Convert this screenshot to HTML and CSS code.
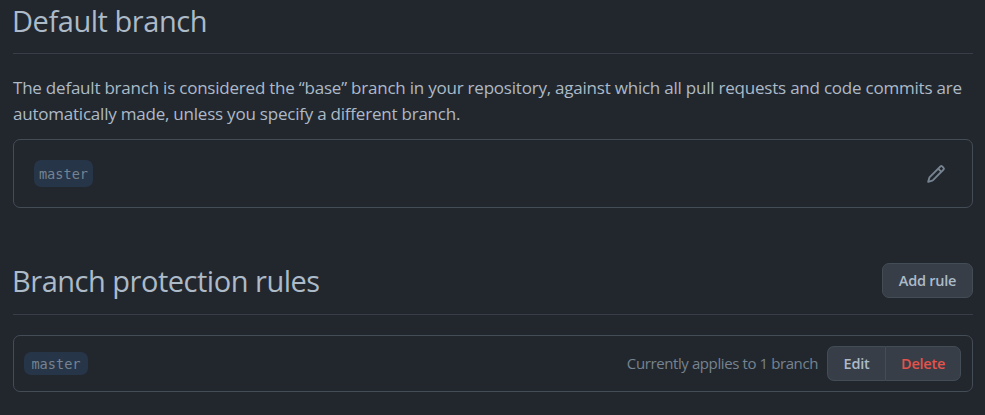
FILE: index.html
```html
<!DOCTYPE html>
<html lang="en">
<head>
<meta charset="utf-8">
<title>Branches</title>
<link rel="stylesheet" href="styles.css">
</head>
<body>
<main class="settings">
  <section class="default-branch">
    <header class="subhead"><h2 class="heading heading-default">Default branch</h2></header>
    <p class="description">The default branch is considered the “base” branch in your repository, against which all pull requests and code commits are<br>automatically made, unless you specify a different branch.</p>
    <div class="box branch-box">
      <code class="branch-name">master</code>
      <button class="icon-button" aria-label="Rename branch">
        <svg class="pencil" viewBox="0 0 16 16" width="20" height="20" fill="currentColor"><path fill-rule="evenodd" d="M11.013 1.427a1.75 1.75 0 012.474 0l1.086 1.086a1.75 1.75 0 010 2.474l-8.61 8.61c-.21.21-.47.364-.756.445l-3.251.93a.75.75 0 01-.927-.928l.929-3.25a1.75 1.75 0 01.445-.758l8.61-8.61zm1.414 1.06a.25.25 0 00-.354 0L10.811 3.75l1.439 1.44 1.263-1.263a.25.25 0 000-.354l-1.086-1.086zM11.189 6.25L9.75 4.81l-6.286 6.287a.25.25 0 00-.064.108l-.558 1.953 1.953-.558a.249.249 0 00.108-.064l6.286-6.286z"/></svg>
      </button>
    </div>
  </section>
  <section class="rules">
    <header class="subhead rules-head">
      <h2 class="heading heading-rules">Branch protection rules</h2>
      <button class="btn add-rule"><span>Add rule</span></button>
    </header>
    <div class="box rule-row">
      <code class="branch-name rule-name">master</code>
      <span class="applies">Currently applies to 1 branch</span>
      <div class="btn-group">
        <button class="btn edit">Edit</button><button class="btn delete">Delete</button>
      </div>
    </div>
  </section>
</main>
</body>
</html>
```

FILE: styles.css
```css
* { box-sizing: border-box; }
body {
  margin: 0;
  height: 415px;
  overflow: hidden;
  background: #22272e;
  color: #adbac7;
  font-family: "Segoe UI", "Open Sans", "Noto Sans", sans-serif;
}
.settings { padding: 0 12px 0 13px; }
.subhead {
  display: flex;
  align-items: center;
  justify-content: space-between;
  height: 54px;
  border-bottom: 1px solid #373e47;
  padding-bottom: 12px;
}
.heading { margin: 0 0 0 -1px; font-size: 29px; line-height: 42px; font-weight: 400; letter-spacing: -0.45px; white-space: nowrap; }
.heading-rules { letter-spacing: -0.48px; }
.description {
  margin: 21px 0 12px;
  font-size: 17px;
  line-height: 26px;
  letter-spacing: -0.22px;
  white-space: nowrap;
}
.box {
  display: flex;
  align-items: center;
  border: 1px solid #444c56;
  border-radius: 7px;
}
.branch-box { height: 69px; padding: 0 26px 0 20px; justify-content: space-between; }
.branch-name {
  width: 59px;
  height: 27px;
  border-radius: 7px;
  background: #263548;
  color: #768390;
  font: 13.6px/28px "DejaVu Sans Mono", monospace;
  text-align: center;
}
.icon-button { display: flex; padding: 0; border: 0; background: none; color: #768390; }
.rules { margin-top: 52px; }
.rules-head { height: 55px; }
.btn {
  height: 35px;
  padding: 0;
  border: 1px solid #444c56;
  border-radius: 7px;
  background: #373e47;
  color: #adbac7;
  font: 600 14.5px/33px "Segoe UI", "Open Sans", "Noto Sans", sans-serif;
  letter-spacing: -0.25px;
}
.add-rule { width: 91px; margin-top: -1px; }
.rule-row { height: 57px; margin-top: 20px; padding: 0 11px 0 10px; }
.rule-name { width: 64px; height: 23px; line-height: 24px; }
.applies { margin-left: auto; margin-right: 9px; padding-bottom: 2px; font-size: 15px; letter-spacing: -0.4px; color: #768390; white-space: nowrap; }
.btn-group { display: flex; }
.edit { width: 58px; border-right: 0; border-radius: 7px 0 0 7px; }
.delete { width: 76px; border-radius: 0 7px 7px 0; color: #e5534b; }
```
